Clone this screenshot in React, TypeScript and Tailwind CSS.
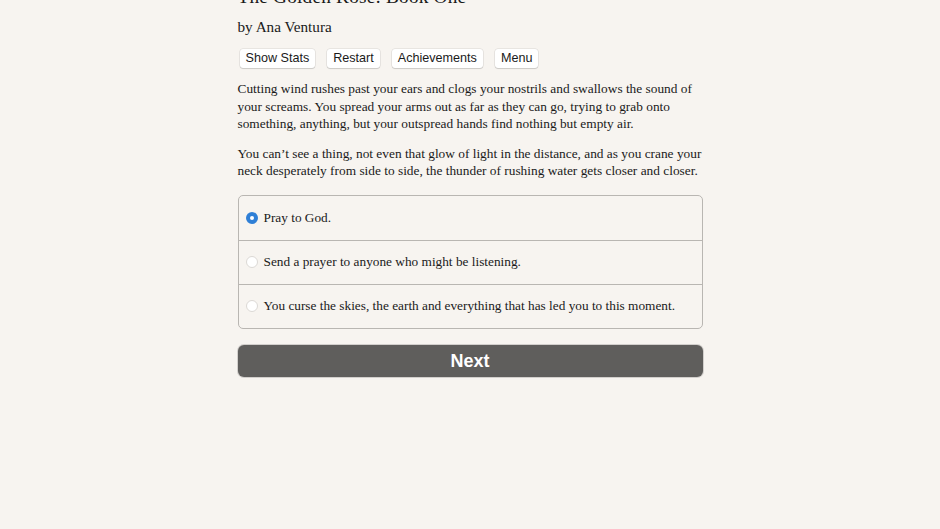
export default function App() {
  const options = [
    'Pray to God.',
    'Send a prayer to anyone who might be listening.',
    'You curse the skies, the earth and everything that has led you to this moment.',
  ];
  const serif = { fontFamily: '"Palatino Linotype", Palatino, "Book Antiqua", "Liberation Serif", serif' };
  return (
    <div className="min-h-[529px] w-full bg-[#f7f4f0] text-[#1a1a1a] overflow-hidden">
      <div className="mx-auto w-[465px] -mt-[14px]" style={serif}>
        <h1 className="text-[19.3px] leading-[22px] tracking-[0.2px]">The Golden Rose: Book One</h1>
        <div className="mt-[9px] text-[15.2px] leading-[20px]">by Ana Ventura</div>
        <div className="mt-[12px] flex gap-[12px] pl-[2px] font-['Liberation_Sans',sans-serif] text-[12.6px]">
          {['Show Stats', 'Restart', 'Achievements', 'Menu'].map((b) => (
            <button
              key={b}
              className="h-[19px] rounded-[3px] bg-white px-[6px] leading-[19px] text-[#1a1a1a] shadow-[0_0_0_0.5px_rgba(0,0,0,0.12),0_1px_1px_rgba(0,0,0,0.12)]"
            >
              {b}
            </button>
          ))}
        </div>
        <div className="mt-[12px] text-[13.35px] leading-[17.5px]">
          <p>
            Cutting wind rushes past your ears and clogs your nostrils and swallows the sound of your screams. You
            spread your arms out as far as they can go, trying to grab onto something, anything, but your outspread
            hands find nothing but empty air.
          </p>
          <p className="mt-[12px]">
            You can’t see a thing, not even that glow of light in the distance, and as you crane your neck
            desperately from side to side, the thunder of rushing water gets closer and closer.
          </p>
        </div>
        <div className="mt-[15px] rounded-[5px] border border-[#b9b6b2]">
          {options.map((o, i) => (
            <div
              key={o}
              className={`flex h-[44px] items-center gap-[6px] px-[7px] text-[13.3px] ${i > 0 ? 'border-t border-[#b9b6b2]' : ''}`}
            >
              {i === 0 ? (
                <span className="flex h-[12px] w-[12px] items-center justify-center rounded-full bg-[#2f7fd6]">
                  <span className="h-[4px] w-[4px] rounded-full bg-white" />
                </span>
              ) : (
                <span className="h-[12px] w-[12px] rounded-full border border-[#dcd9d5] bg-white" />
              )}
              <span>{o}</span>
            </div>
          ))}
        </div>
        <button className="mt-[16px] h-[32px] w-full rounded-[6px] bg-[#5f5e5c] pt-[1px] font-['Liberation_Sans',sans-serif] text-[18px] font-bold text-white shadow-[0_0_0_1px_rgba(0,0,0,0.15)]">
          Next
        </button>
      </div>
    </div>
  );
}
